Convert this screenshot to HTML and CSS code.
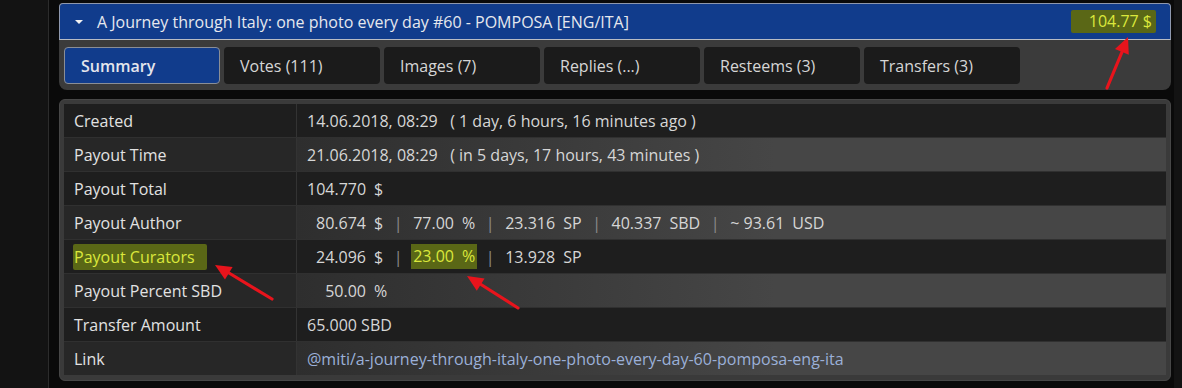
FILE: index.html
```html
<!DOCTYPE html>
<html lang="en">
<head>
<meta charset="utf-8">
<title>Post summary</title>
<link rel="stylesheet" href="styles.css">
</head>
<body>
<div class="page">
  <div class="post-head">
    <span class="caret"></span>
    <span class="title">A Journey through Italy: one photo every day #60 - POMPOSA [ENG/ITA]</span>
    <span class="price mark">104.77 $</span>
  </div>
  <div class="tabs">
    <div class="tab active">Summary</div>
    <div class="tab">Votes (111)</div>
    <div class="tab">Images (7)</div>
    <div class="tab">Replies (...)</div>
    <div class="tab">Resteems (3)</div>
    <div class="tab">Transfers (3)</div>
  </div>
  <div class="panel">
    <div class="kv">
      <div class="row odd">
        <div class="label">Created</div>
        <div class="value">14.06.2018, 08:29&nbsp;&nbsp;&nbsp;( 1 day, 6 hours, 16 minutes ago )</div>
      </div>
      <div class="row even">
        <div class="label">Payout Time</div>
        <div class="value">21.06.2018, 08:29&nbsp;&nbsp;&nbsp;( in 5 days, 17 hours, 43 minutes )</div>
      </div>
      <div class="row odd">
        <div class="label">Payout Total</div>
        <div class="value"><span class="num">104.770</span><span class="unit">$</span></div>
      </div>
      <div class="row even">
        <div class="label">Payout Author</div>
        <div class="value"><span class="num">80.674</span><span class="unit">$</span><span class="sep">|</span>77.00<span class="unit">%</span><span class="sep">|</span>23.316<span class="unit">SP</span><span class="sep">|</span>40.337<span class="unit">SBD</span><span class="sep">|</span>~ 93.61<span class="unit">USD</span></div>
      </div>
      <div class="row odd">
        <div class="label"><span class="mark label-mark">Payout Curators</span></div>
        <div class="value"><span class="num">24.096</span><span class="unit">$</span><span class="sep">|</span><span class="mark pct-mark">23.00<span class="unit">%</span></span><span class="sep">|</span>13.928<span class="unit">SP</span></div>
      </div>
      <div class="row even">
        <div class="label">Payout Percent SBD</div>
        <div class="value"><span class="num">50.00</span><span class="unit">%</span></div>
      </div>
      <div class="row odd">
        <div class="label">Transfer Amount</div>
        <div class="value">65.000 SBD</div>
      </div>
      <div class="row even last">
        <div class="label">Link</div>
        <div class="value"><a class="link" href="#">@miti/a-journey-through-italy-one-photo-every-day-60-pomposa-eng-ita</a></div>
      </div>
    </div>
  </div>
</div>
<svg class="arrows" width="1182" height="388" viewBox="0 0 1182 388" aria-hidden="true">
  <g stroke="#e8141c" stroke-width="3.2" stroke-linecap="round" fill="none">
    <line x1="1107" y1="88" x2="1122" y2="52"/>
    <line x1="272" y1="299" x2="229" y2="273"/>
    <line x1="518" y1="308" x2="481" y2="284.5"/>
  </g>
  <g fill="#e8141c">
    <polygon points="1128,37 1128.8,54.8 1115,48.9"/>
    <polygon points="215,265 232.6,267 225,279.6"/>
    <polygon points="467,276 484.6,278.4 476.8,290.8"/>
  </g>
</svg>
</body>
</html>
```

FILE: styles.css
```css
html, body {
  margin: 0;
  padding: 0;
}
body {
  background: #131313;
  font-family: "Open Sans", "Noto Sans", sans-serif;
  font-size: 16px;
  color: #dcdcdc;
  width: 1182px;
  height: 388px;
  overflow: hidden;
  position: relative;
}
.page {
  margin-left: 48px;
  width: 1126px;
  height: 388px;
  box-sizing: border-box;
  border-left: 1px solid #2c2c2c;
  background: #0a0a0a;
  padding: 3px 3px 0 10px;
}
.post-head {
  height: 37px;
  box-sizing: border-box;
  display: flex;
  align-items: center;
  background: #113c8c;
  border: 1px solid #8e98ae;
  border-bottom-color: #b8bcc4;
  border-radius: 4px 4px 0 0;
  padding: 0 14px 0 15px;
  color: #e6e8ee;
}
.caret {
  width: 0;
  height: 0;
  border-left: 4px solid transparent;
  border-right: 4px solid transparent;
  border-top: 4px solid #f2f2f2;
  margin-right: 14px;
  margin-top: 1px;
}
.title {
  line-height: 20px;
}
.mark {
  background: #5a6716;
  color: #dbe83c;
}
.price {
  margin-left: auto;
  padding: 1px 4px 2px 18px;
  line-height: 20px;
  border-radius: 2px;
}
.tabs {
  height: 50px;
  box-sizing: border-box;
  background: #3b3b3b;
  border-radius: 0 0 8px 8px;
  padding: 7px 5px 6px;
  display: flex;
  gap: 4px;
}
.tab {
  width: 156px;
  height: 37px;
  box-sizing: border-box;
  background: #1b1b1b;
  border-radius: 4px;
  padding-left: 16px;
  padding-top: 1px;
  line-height: 36px;
  color: #d6d6d6;
}
.tab.active {
  background: #113c8c;
  border: 1px solid #8a8e96;
  padding-top: 1px;
  line-height: 34px;
  font-weight: 600;
  color: #e4e6ec;
}
.panel {
  margin-top: 9px;
  height: 282px;
  box-sizing: border-box;
  background: #3a3a3a;
  border: 1px solid #474747;
  border-radius: 6px;
  padding: 4px;
}
.kv {
  display: flex;
  flex-direction: column;
}
.row {
  display: grid;
  grid-template-columns: 233px 1fr;
  height: 34px;
  box-sizing: border-box;
  border-bottom: 1px solid #303030;
}
.row.last {
  border-bottom: none;
  height: 33px;
}
.label {
  display: flex;
  align-items: center;
  padding-left: 10px;
  border-right: 1px solid #333;
  color: #e2e2e2;
}
.value {
  display: flex;
  align-items: center;
  padding-left: 10px;
  white-space: pre;
  color: #d6d6d6;
}
.odd .label, .odd .value {
  background: #1e1e1e;
}
.even .label {
  background: #272727;
}
.even .value {
  background: linear-gradient(to right, #2e2e2e, #464646 55%);
}
.num {
  display: inline-block;
  width: 59px;
  text-align: right;
}
.unit {
  margin-left: 8px;
}
.sep {
  display: inline-block;
  width: 30px;
  text-align: center;
  color: #8c8c8c;
}
.label-mark {
  margin-left: -1px;
  padding: 2px 12px 2px 1px;
  border-radius: 2px;
}
.pct-mark {
  margin-left: -2px;
  margin-right: -2px;
  padding: 1px 2px 2px;
}
.link {
  color: #9bb0d8;
  text-decoration: none;
}
.arrows {
  position: absolute;
  left: 0;
  top: 0;
  pointer-events: none;
}
```
